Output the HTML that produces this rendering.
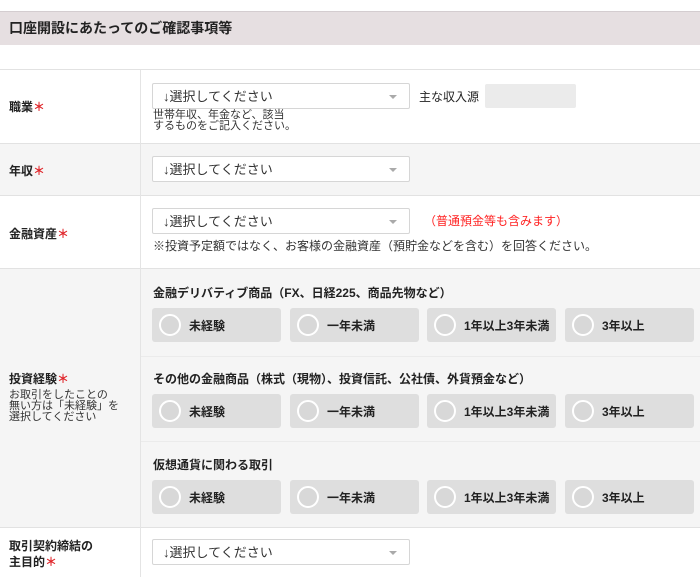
<!DOCTYPE html>
<html><head><meta charset="utf-8"><style>
*{margin:0;padding:0;box-sizing:border-box}
body{width:700px;height:577px;overflow:hidden;background:#fff;font-family:"Liberation Sans","Noto Sans CJK JP",sans-serif;color:#222;position:relative}
.abs{position:absolute}
.hdr{left:0;top:11px;width:700px;height:34px;background:#e6dfe1;border-top:1px solid #d4cdd0;font-size:14px;font-weight:bold;padding:6px 0 0 9px}
.row{left:0;width:700px;border-top:1px solid #e2e2e2}
.lab{font-size:12px;font-weight:bold;left:9px}
.req{color:#e0252a}
.vl{left:140px;width:1px;background:#e4e4e4}
.sel{width:258px;height:26px;background:#fff;border:1px solid #d6d6d6;border-radius:2px;font-size:13px;padding:2px 0 0 10px;color:#333}
.sel:after{content:"";position:absolute;right:12px;top:11px;border:4px solid transparent;border-top:4px solid #aaa}
.small{font-size:11px;line-height:11px;color:#333}
.q{font-size:12px;font-weight:bold;left:153px}
.rb{width:129px;height:34px;background:#dedede;border-radius:3px;font-size:12px;font-weight:bold}
.rb i{position:absolute;left:7px;top:6px;width:22px;height:22px;border-radius:50%;border:2px solid #fff;background:#d8d8d8}
.rb span{position:absolute;top:9px;left:37px}
.sep{left:141px;width:559px;height:1px;background:#ebebeb}
</style></head><body>
<div class="abs hdr">口座開設にあたってのご確認事項等</div>
<div class="abs row" style="top:69px;height:74px;background:#fff"></div>
<div class="abs row" style="top:143px;height:52px;background:#f5f5f5"></div>
<div class="abs row" style="top:195px;height:73px;background:#fff"></div>
<div class="abs row" style="top:268px;height:259px;background:#f5f5f5"></div>
<div class="abs row" style="top:527px;height:50px;background:#fff"></div>
<div class="abs vl" style="top:70px;height:507px"></div>

<div class="abs lab" style="top:98px">職業<span class="req">＊</span></div>
<div class="abs sel" style="left:152px;top:83px">↓選択してください</div>
<div class="abs" style="left:419px;top:88px;font-size:12px">主な収入源</div>
<div class="abs" style="left:485px;top:84px;width:91px;height:24px;background:#ebebeb;border-radius:2px"></div>
<div class="abs small" style="left:153px;top:110px">世帯年収、年金など、該当<br>するものをご記入ください。</div>

<div class="abs lab" style="top:162px">年収<span class="req">＊</span></div>
<div class="abs sel" style="left:152px;top:156px">↓選択してください</div>

<div class="abs lab" style="top:225px">金融資産<span class="req">＊</span></div>
<div class="abs sel" style="left:152px;top:208px">↓選択してください</div>
<div class="abs" style="left:424px;top:212px;font-size:12px;color:#f22">（普通預金等も含みます）</div>
<div class="abs" style="left:153px;top:237px;font-size:12px;color:#333">※投資予定額ではなく、お客様の金融資産（預貯金などを含む）を回答ください。</div>

<div class="abs lab" style="top:370px">投資経験<span class="req">＊</span></div>
<div class="abs small" style="left:9px;top:390px">お取引をしたことの<br>無い方は「未経験」を<br>選択してください</div>

<div class="abs q" style="top:284px">金融デリバティブ商品（FX、日経225、商品先物など）</div>
<div class="abs sep" style="top:356px"></div>
<div class="abs q" style="top:370px">その他の金融商品（株式（現物）、投資信託、公社債、外貨預金など）</div>
<div class="abs sep" style="top:441px"></div>
<div class="abs q" style="top:456px">仮想通貨に関わる取引</div>

<div class="abs rb" style="left:152px;top:308px"><i></i><span>未経験</span></div>
<div class="abs rb" style="left:290px;top:308px"><i></i><span>一年未満</span></div>
<div class="abs rb" style="left:427px;top:308px"><i></i><span>1年以上3年未満</span></div>
<div class="abs rb" style="left:565px;top:308px"><i></i><span>3年以上</span></div>
<div class="abs rb" style="left:152px;top:394px"><i></i><span>未経験</span></div>
<div class="abs rb" style="left:290px;top:394px"><i></i><span>一年未満</span></div>
<div class="abs rb" style="left:427px;top:394px"><i></i><span>1年以上3年未満</span></div>
<div class="abs rb" style="left:565px;top:394px"><i></i><span>3年以上</span></div>
<div class="abs rb" style="left:152px;top:480px"><i></i><span>未経験</span></div>
<div class="abs rb" style="left:290px;top:480px"><i></i><span>一年未満</span></div>
<div class="abs rb" style="left:427px;top:480px"><i></i><span>1年以上3年未満</span></div>
<div class="abs rb" style="left:565px;top:480px"><i></i><span>3年以上</span></div>

<div class="abs lab" style="top:538px;line-height:16px">取引契約締結の<br>主目的<span class="req">＊</span></div>
<div class="abs sel" style="left:152px;top:539px">↓選択してください</div>
</body></html>
